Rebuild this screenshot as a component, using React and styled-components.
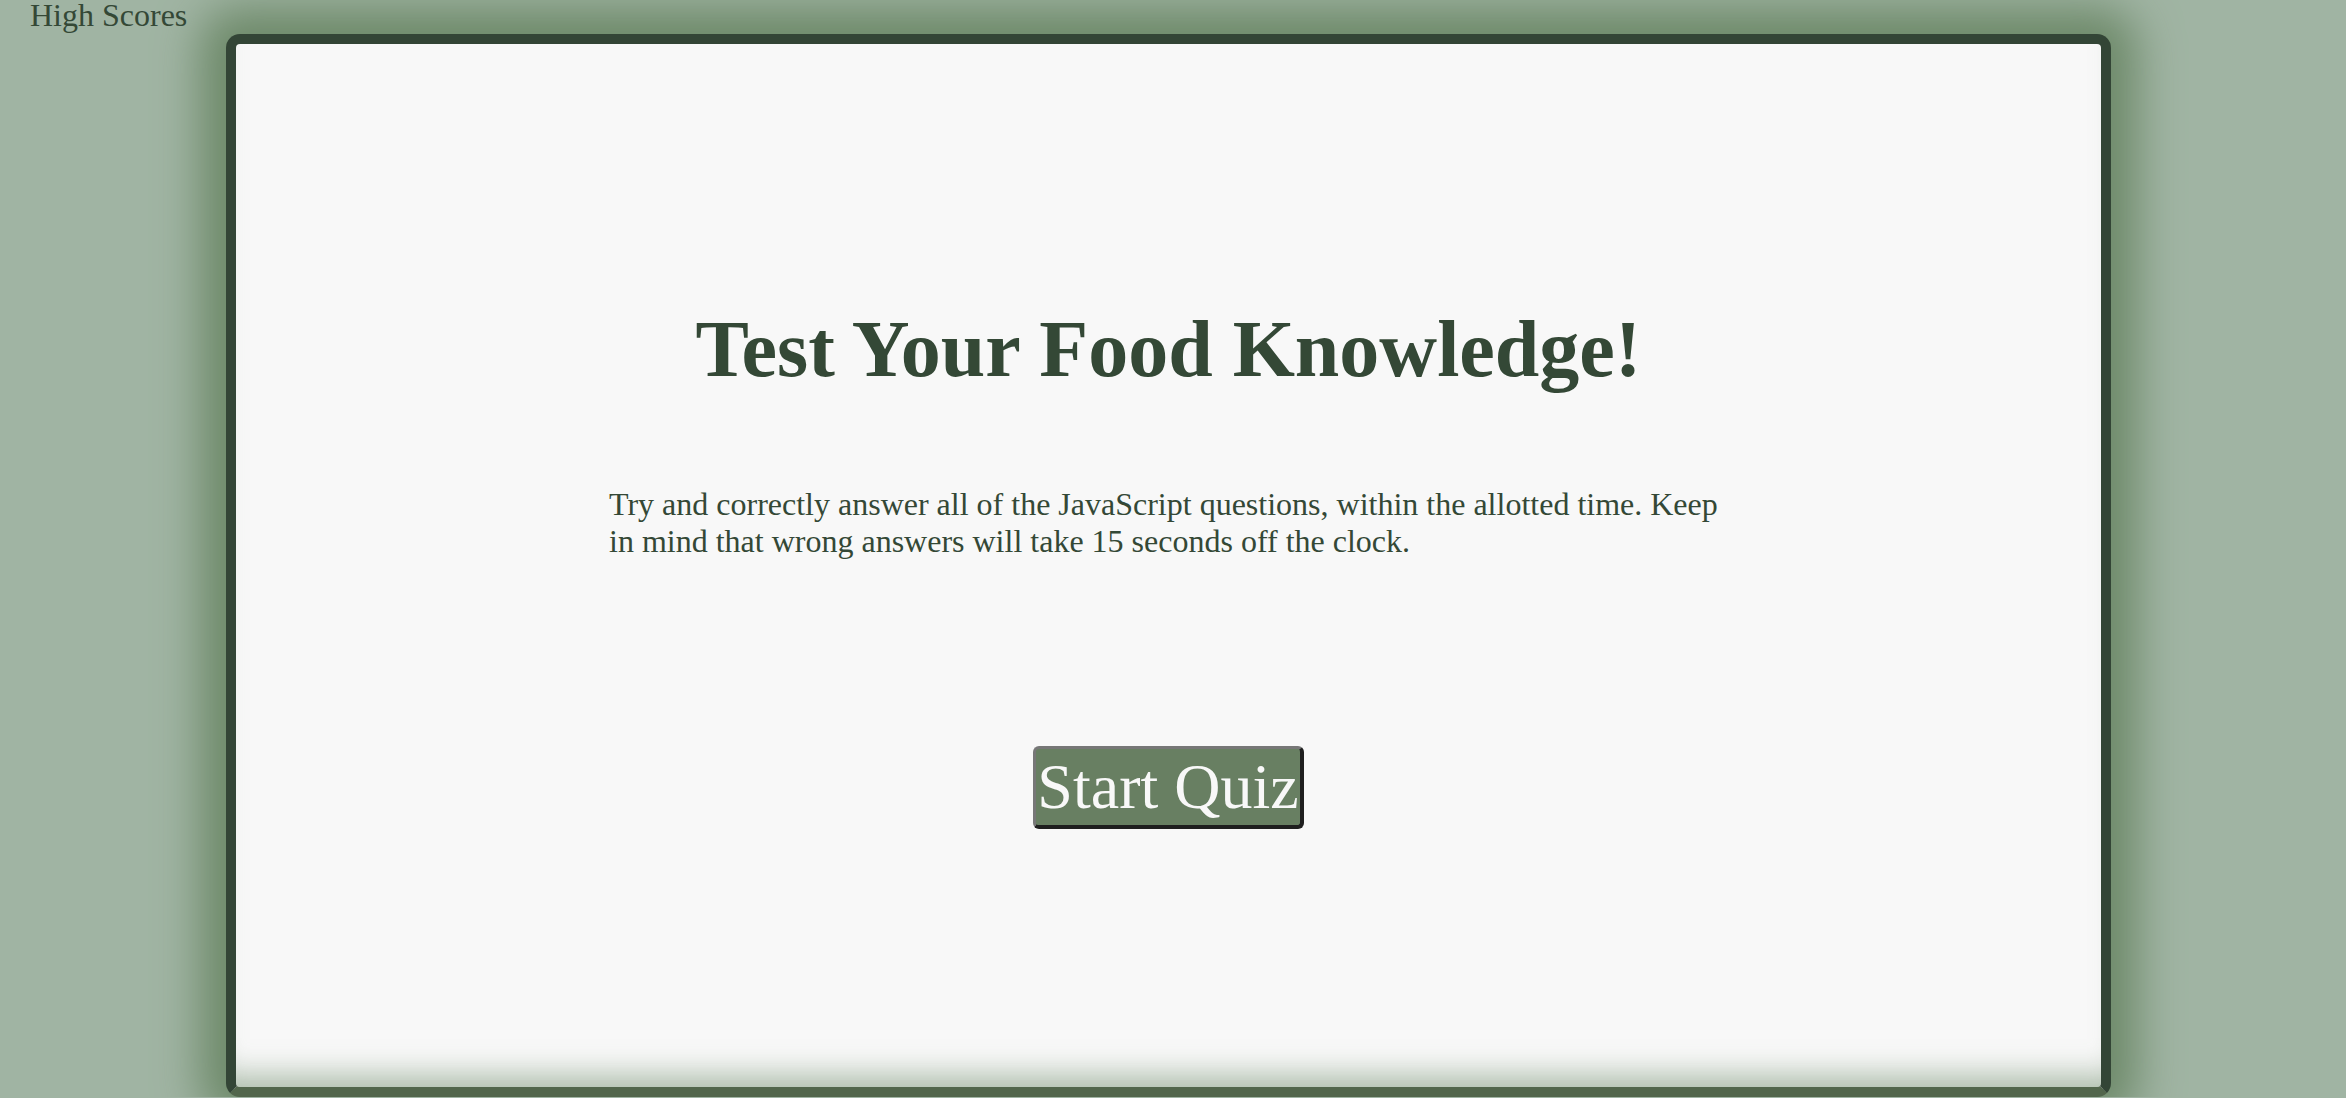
import React from "react";
import styled, { createGlobalStyle } from "styled-components";

const GlobalStyle = createGlobalStyle`
  html, body {
    margin: 0;
    padding: 0;
    overflow: hidden;
  }
  body {
    background-color: #a0b4a3;
    font-family: "Liberation Serif", "Times New Roman", serif;
    color: #344836;
  }
`;

const Header = styled.header`
  padding-left: 30px;
  height: 32px;
`;

const ScoresLink = styled.a`
  display: inline-block;
  margin-top: -1px;
  font-size: 32px;
  line-height: 1;
  color: #344836;
  text-decoration: none;
  cursor: pointer;
`;

const Card = styled.main`
  box-sizing: border-box;
  margin: 2px 0 0 226px;
  width: 1885px;
  height: 1063px;
  background-color: #f8f8f8;
  border: 10px solid #334536;
  border-bottom-color: #52664c;
  border-radius: 14px;
  box-shadow: 0 0 44px 26px #6e8a6a,
    inset 0 -34px 30px -22px rgba(110, 138, 106, 0.55);
  display: flex;
  flex-direction: column;
  align-items: center;
  padding-top: 261px;
`;

const Title = styled.h1`
  margin: 0;
  font-size: 80px;
  line-height: 88px;
  font-weight: bold;
  color: #344836;
  text-align: center;
`;

const Intro = styled.p`
  margin: 93px 0 0;
  width: 60%;
  font-size: 32px;
  line-height: 36.8px;
  color: #344836;
  text-align: left;
`;

const StartButton = styled.button`
  margin-top: 186px;
  padding: 2px 1px;
  font-family: "Liberation Serif", "Times New Roman", serif;
  font-size: 64px;
  line-height: 72px;
  color: #f8f8f8;
  background-color: #687f62;
  border-style: solid;
  border-width: 3px 4px 4px 3px;
  border-color: #777777 #1f1f1f #1f1f1f #777777;
  border-radius: 6px;
  cursor: pointer;
`;

export default function App() {
  return (
    <>
      <GlobalStyle />
      <Header>
        <ScoresLink>High Scores</ScoresLink>
      </Header>
      <Card>
        <Title>Test Your Food Knowledge!</Title>
        <Intro>
          Try and correctly answer all of the JavaScript questions, within the
          allotted time. Keep in mind that wrong answers will take 15 seconds
          off the clock.
        </Intro>
        <StartButton>Start Quiz</StartButton>
      </Card>
    </>
  );
}
